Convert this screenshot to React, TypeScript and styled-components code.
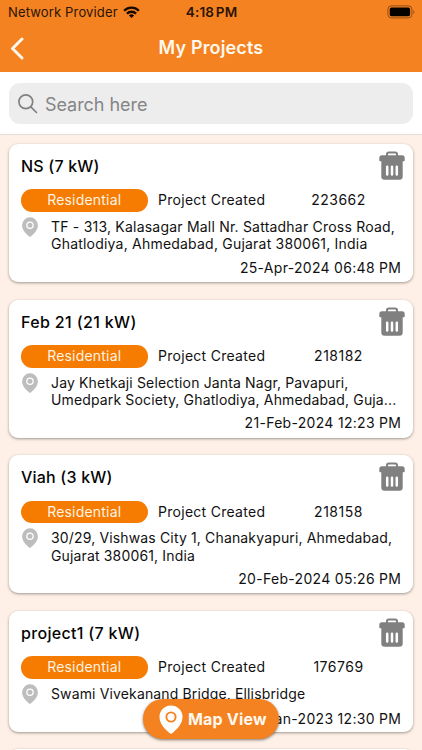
import React from "react";
import styled, { createGlobalStyle } from "styled-components";

const GlobalStyle = createGlobalStyle`
  * { box-sizing: border-box; }
  body { margin: 0; background: #fef0e6; font-family: Inter, "Liberation Sans", sans-serif; color: #111; }
`;

const Screen = styled.main`
  position: relative;
  display: flex;
  flex-direction: column;
  width: 422px;
  height: 750px;
  overflow: hidden;
  background: #fef0e6;
`;

const Header = styled.header`
  flex: none;
  height: 72px;
  background: #f58220;
`;

const StatusBar = styled.div`
  display: grid;
  grid-template-columns: 1fr auto 1fr;
  align-items: center;
  height: 24px;
  padding: 0 7px 0 8px;
  color: #2a1405;
`;

const Carrier = styled.div`
  display: flex;
  align-items: center;
  gap: 5px;
  font-size: 13px;
  letter-spacing: 0.15px;
  white-space: nowrap;
`;

const Clock = styled.div`
  font-size: 13.5px;
  font-weight: 600;
  letter-spacing: 0.2px;
  word-spacing: -2px;
`;

const BatterySlot = styled.div`
  display: flex;
  justify-content: flex-end;
`;

const NavBar = styled.div`
  display: grid;
  grid-template-columns: 40px 1fr 40px;
  align-items: center;
  height: 48px;
`;

const BackButton = styled.button`
  display: flex;
  padding: 0 0 0 10px;
  border: 0;
  background: none;
`;

const Title = styled.h1`
  margin: 0;
  color: #fff8ee;
  font-size: 18px;
  font-weight: 600;
  letter-spacing: 0.15px;
  line-height: 24px;
  text-align: center;
`;

const SearchArea = styled.div`
  flex: none;
  height: 63px;
  padding: 11px 9px 0;
  background: #fff;
  border-bottom: 1px solid #e4dfdc;
`;

const SearchField = styled.label`
  display: flex;
  align-items: center;
  gap: 7px;
  height: 41px;
  padding-left: 9px;
  border-radius: 11px;
  background: #ededed;
`;

const SearchInput = styled.input`
  flex: 1;
  min-width: 0;
  padding: 1px 0 0;
  border: 0;
  outline: 0;
  background: none;
  font: 400 18px Inter, sans-serif;
  letter-spacing: -0.05px;
  &::placeholder { color: #858588; opacity: 1; }
`;

const List = styled.section`
  display: flex;
  flex-direction: column;
  gap: 17.6px;
  padding: 9px 9px 0;
`;

const Card = styled.article`
  position: relative;
  flex: none;
  height: ${(p: { $short?: boolean }) => (p.$short ? 121 : 138)}px;
  padding: 11px 12px 0;
  border-radius: 9px;
  background: #fff;
  box-shadow: 0 1px 3px rgba(0, 0, 0, 0.38);
`;

const CardTitle = styled.h2<{ $tracking: number }>`
  margin: 0 0 11.4px;
  color: #050505;
  font-size: 16px;
  font-weight: 500;
  letter-spacing: ${(p) => p.$tracking}px;
  line-height: 23px;
`;

const DeleteButton = styled.button`
  position: absolute;
  top: 7px;
  right: 8px;
  display: flex;
  padding: 0;
  border: 0;
  background: none;
`;

const MetaRow = styled.div`
  display: grid;
  grid-template-columns: 126.5px 118px 100px;
  column-gap: 10.5px;
  align-items: start;
  height: 22.6px;
  font-size: 14px;
  line-height: 21px;
  letter-spacing: 0.28px;
  white-space: nowrap;
`;

const Tag = styled.span`
  height: 22.6px;
  border-radius: 11.3px;
  background: #f57c00;
  color: #fff3e4;
  letter-spacing: 0.2px;
  text-align: center;
`;

const Code = styled.span`
  margin-left: 4px;
  letter-spacing: 0.5px;
  text-align: center;
`;

const AddressRow = styled.div`
  display: grid;
  grid-template-columns: 18px 1fr;
  column-gap: 12px;
  margin-top: 5px;
`;

const Address = styled.p<{ $tracking: number }>`
  margin: 1px 0 0;
  font-size: 14px;
  letter-spacing: ${(p) => p.$tracking}px;
  line-height: 17.4px;
  white-space: pre-line;
`;

const DateText = styled.time`
  display: block;
  margin: 6px -0.3px 0 0;
  font-size: 14px;
  letter-spacing: 0.3px;
  line-height: 18px;
  text-align: right;
`;

const MapButton = styled.button`
  position: absolute;
  bottom: 11px;
  left: 143px;
  display: flex;
  align-items: center;
  gap: 5px;
  width: 136px;
  height: 40px;
  padding: 0 0 0 16px;
  border: 0;
  border-radius: 20px;
  background: #f58220;
  box-shadow: 0 1px 3px rgba(0, 0, 0, 0.5);
  color: #fff8ee;
  font: 700 16px Inter, sans-serif;
  letter-spacing: 0.2px;
  white-space: nowrap;
`;

const WifiIcon = () => (
  <svg width="17" height="13" viewBox="0 0 17 13" fill="none" stroke="#160900" strokeWidth="2.3">
    <path d="M1.1 4.7a10.6 10.6 0 0 1 14.8 0M3.9 7.6a6.6 6.6 0 0 1 9.2 0" />
    <path d="M8.5 12 5.9 9.4a3.8 3.8 0 0 1 5.2 0Z" fill="#160900" stroke="none" />
  </svg>
);

const BatteryIcon = () => (
  <svg width="28" height="14" viewBox="0 0 28 14">
    <rect x="0.9" y="0.9" width="24" height="12" rx="3.4" fill="none" stroke="#934e17" strokeWidth="1" />
    <rect x="2.7" y="2.6" width="20.4" height="8.6" rx="1.8" fill="#050200" />
    <path d="M26.3 4.9c1.4.6 1.4 3.4 0 4Z" fill="#934e17" />
  </svg>
);

const BackIcon = () => (
  <svg width="15" height="23" viewBox="0 0 15 23" fill="none" stroke="#fff8ee" strokeWidth="2.9" strokeLinecap="round" strokeLinejoin="round">
    <path d="M12 2 2.5 11.5 12 21" />
  </svg>
);

const SearchIcon = () => (
  <svg width="20" height="20" viewBox="0 0 20 20" fill="none" stroke="#818184" strokeWidth="1.7" strokeLinecap="round">
    <circle cx="7.8" cy="7.8" r="6.9" />
    <path d="m12.8 12.8 5.7 5.7" />
  </svg>
);

const TrashIcon = () => (
  <svg width="26" height="29" viewBox="0 0 26 29">
    <path d="M8 5V3.3Q8 1.5 9.8 1.5h6.4Q18 1.5 18 3.3V5" fill="none" stroke="#808080" strokeWidth="2" />
    <path d="M3 4.2h20a2.7 2.7 0 0 1 2.7 2.7v2.5q0 .8-.8.8H1.1q-.8 0-.8-.8V6.9A2.7 2.7 0 0 1 3 4.2Z" fill="#808080" />
    <path d="M2.3 9h21.4v16.4a3.3 3.3 0 0 1-3.3 3.3H5.6a3.3 3.3 0 0 1-3.3-3.3Z" fill="#808080" />
    <path d="M8.2 15.8v7.8M13 15.8v7.8M17.8 15.8v7.8" stroke="#fff" strokeWidth="2.5" strokeLinecap="round" />
  </svg>
);

type PinProps = { width: number; height: number; fill: string; ring: string };

const PinIcon = ({ width, height, fill, ring }: PinProps) => (
  <svg width={width} height={height} viewBox="0 0 24 29">
    <path d="M12 .5A11.5 11.5 0 0 1 23.5 12C23.5 19.5 17 25 13.2 28.2q-1.2.9-2.4 0C7 25 .5 19.5.5 12A11.5 11.5 0 0 1 12 .5Z" fill={fill} />
    <circle cx="12" cy="12" r="4.6" fill="none" stroke={ring} strokeWidth="1.9" />
  </svg>
);

type Project = {
  name: string;
  code: string;
  address: string;
  date: string;
  titleTracking: number;
  tracking: number;
  short?: boolean;
};

const projects: Project[] = [
  { name: "NS (7 kW)", code: "223662", address: "TF - 313, Kalasagar Mall Nr. Sattadhar Cross Road,\nGhatlodiya, Ahmedabad, Gujarat 380061, India", date: "25-Apr-2024 06:48 PM", titleTracking: 0.2, tracking: 0.21 },
  { name: "Feb 21 (21 kW)", code: "218182", address: "Jay Khetkaji Selection Janta Nagr, Pavapuri,\nUmedpark Society, Ghatlodiya, Ahmedabad, Guja...", date: "21-Feb-2024 12:23 PM", titleTracking: 0.36, tracking: 0.14 },
  { name: "Viah (3 kW)", code: "218158", address: "30/29, Vishwas City 1, Chanakyapuri, Ahmedabad,\nGujarat 380061, India", date: "20-Feb-2024 05:26 PM", titleTracking: 0.2, tracking: 0.15 },
  { name: "project1 (7 kW)", code: "176769", address: "Swami Vivekanand Bridge, Ellisbridge", date: "31-Jan-2023 12:30 PM", titleTracking: 0.32, tracking: 0.14, short: true },
];

export default function App() {
  return (
    <>
      <GlobalStyle />
      <Screen>
        <Header>
          <StatusBar>
            <Carrier>Network Provider<WifiIcon /></Carrier>
            <Clock>4:18 PM</Clock>
            <BatterySlot><BatteryIcon /></BatterySlot>
          </StatusBar>
          <NavBar>
            <BackButton aria-label="Back"><BackIcon /></BackButton>
            <Title>My Projects</Title>
          </NavBar>
        </Header>
        <SearchArea>
          <SearchField>
            <SearchIcon />
            <SearchInput placeholder="Search here" />
          </SearchField>
        </SearchArea>
        <List>
          {projects.map((p) => (
            <Card key={p.code} $short={p.short}>
              <CardTitle $tracking={p.titleTracking}>{p.name}</CardTitle>
              <DeleteButton aria-label="Delete project"><TrashIcon /></DeleteButton>
              <MetaRow>
                <Tag>Residential</Tag>
                <span>Project Created</span>
                <Code>{p.code}</Code>
              </MetaRow>
              <AddressRow>
                <PinIcon width={18} height={20} fill="#bdbdbd" ring="#fff" />
                <Address $tracking={p.tracking}>{p.address}</Address>
              </AddressRow>
              <DateText>{p.date}</DateText>
            </Card>
          ))}
          <Card />
        </List>
        <MapButton>
          <PinIcon width={24} height={29} fill="#fff" ring="#f58220" />
          Map View
        </MapButton>
      </Screen>
    </>
  );
}
